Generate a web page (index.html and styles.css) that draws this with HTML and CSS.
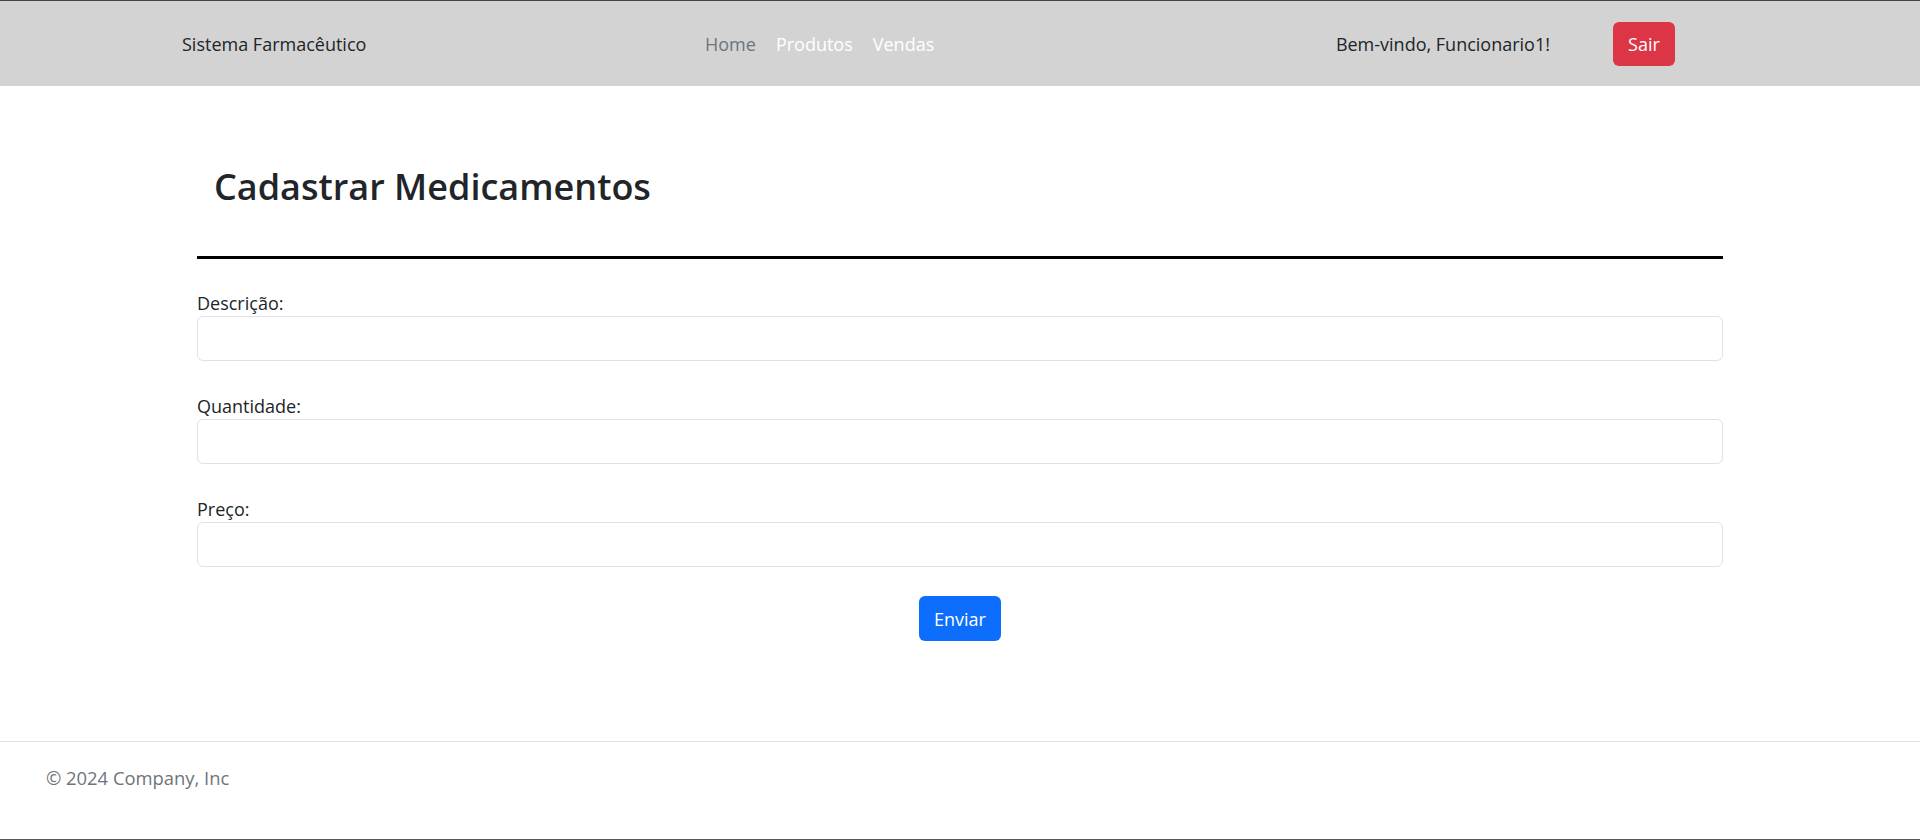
FILE: index.html
```html
<!DOCTYPE html>
<html lang="pt-BR">
<head>
<meta charset="utf-8">
<title>Cadastrar Medicamentos</title>
<link rel="stylesheet" href="styles.css">
</head>
<body>
<header class="topbar">
  <div class="brand">Sistema Farmacêutico</div>
  <nav class="menu">
    <a class="menu-link is-muted" href="#">Home</a>
    <a class="menu-link" href="#">Produtos</a>
    <a class="menu-link" href="#">Vendas</a>
  </nav>
  <div class="user">
    <span class="welcome">Bem-vindo, Funcionario1!</span>
    <button class="btn btn-danger" type="button">Sair</button>
  </div>
</header>

<main class="page">
  <div class="title-wrap">
    <h1 class="title">Cadastrar Medicamentos</h1>
  </div>
  <hr class="rule">
  <form class="form">
    <div class="field">
      <label class="label" for="descricao">Descrição:</label>
      <input class="input" id="descricao" type="text">
    </div>
    <div class="field">
      <label class="label" for="quantidade">Quantidade:</label>
      <input class="input" id="quantidade" type="text">
    </div>
    <div class="field">
      <label class="label" for="preco">Preço:</label>
      <input class="input" id="preco" type="text">
    </div>
    <div class="actions">
      <button class="btn btn-primary" type="submit">Enviar</button>
    </div>
  </form>
</main>

<footer class="footer">
  <p class="copy">© 2024 Company, Inc</p>
</footer>
</body>
</html>
```

FILE: styles.css
```css
* { box-sizing: border-box; }

html, body {
  margin: 0;
  padding: 0;
}

body {
  font-family: "Open Sans", "Noto Sans", sans-serif;
  font-size: 18px;
  line-height: 24px;
  color: #212529;
  background: #fff;
  height: 840px;
  display: flex;
  flex-direction: column;
}

/* ---------- top bar ---------- */
.topbar {
  height: 86px;
  background: #d3d3d3;
  border-top: 1px solid #454545;
  display: flex;
  align-items: center;
  padding-left: 182px;
  padding-right: 245px;
}

.brand {
  width: 513px;
  color: #212529;
}

.menu {
  display: flex;
}

.menu-link {
  padding: 0 10px;
  color: #fff;
  text-decoration: none;
}

.menu-link.is-muted {
  color: #6c757d;
}

.user {
  margin-left: auto;
  display: flex;
  align-items: center;
  gap: 63px;
}

.welcome {
  color: #212529;
}

/* ---------- buttons ---------- */
.btn {
  font-family: inherit;
  font-size: 18px;
  line-height: 24px;
  border: 0;
  border-radius: 6px;
  color: #fff;
  padding: 0 15px;
  display: inline-flex;
  align-items: center;
  justify-content: center;
  cursor: pointer;
}

.btn-danger {
  background: #dc3545;
  height: 44px;
  min-width: 62px;
}

.btn-primary {
  background: #0d6efd;
  height: 45px;
  min-width: 82px;
}

/* ---------- main ---------- */
.page {
  width: 1526px;
  margin: 0 auto;
  padding-bottom: 100px;
}

.title-wrap {
  padding-top: 79px;
  padding-left: 17px;
}

.title {
  margin: 0;
  font-size: 36px;
  line-height: 44px;
  font-weight: 600;
  color: #212529;
}

.rule {
  margin: 47px 0 0;
  height: 3px;
  border: 0;
  background: #000;
}

.form {
  margin-top: 32px;
  display: flex;
  flex-direction: column;
}

.field {
  display: flex;
  flex-direction: column;
}

.field + .field {
  margin-top: 33px;
}

.label {
  display: block;
  margin-bottom: 1px;
  color: #212529;
}

.input {
  height: 45px;
  width: 100%;
  border: 1px solid #dee2e6;
  border-radius: 6px;
  background: #fff;
  font-family: inherit;
  font-size: 18px;
  padding: 0 15px;
}

.actions {
  margin-top: 29px;
  display: flex;
  justify-content: center;
}

/* ---------- footer ---------- */
.footer {
  margin-top: auto;
  height: 99px;
  border-top: 1px solid #dee2e6;
  border-bottom: 1px solid #5a5a5a;
  padding: 24px 46px 0;
}

.copy {
  margin: 0;
  font-size: 18.4px;
  color: #6c757d;
}
```
